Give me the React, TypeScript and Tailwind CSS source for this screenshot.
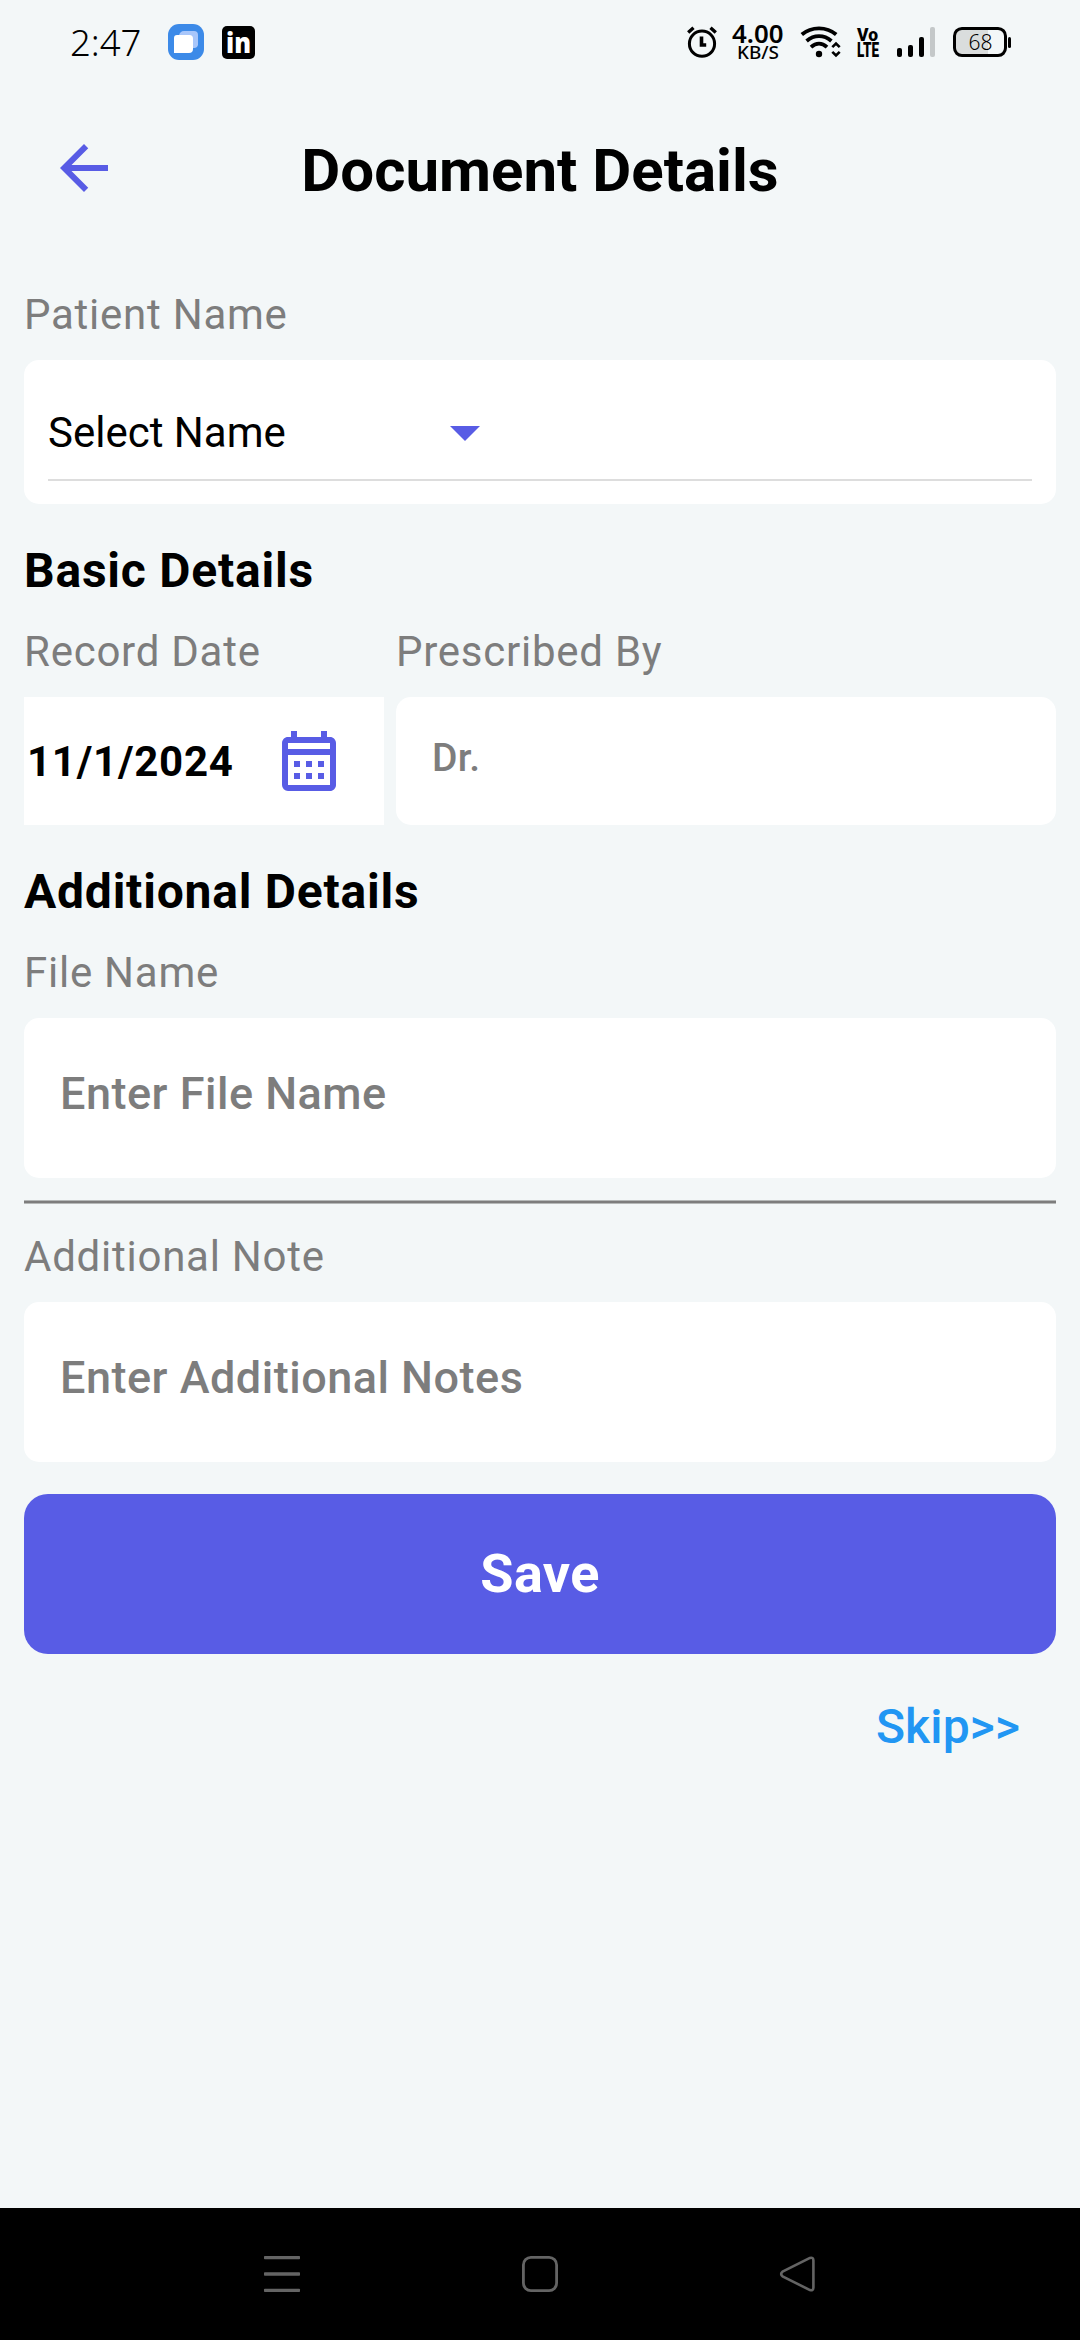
import type { ReactNode } from "react";

function StatusBar() {
  return (
    <div className="flex h-[84px] shrink-0 items-center justify-between pl-[70px] pr-[68px] text-black">
      <div className="flex items-center">
        <span className="w-[98px] font-['Noto_Sans',sans-serif] text-[36.500px] font-[350] leading-[84px]">2:47</span>
        <svg width="36" height="36" viewBox="0 0 36 36">
          <rect width="36" height="36" rx="11" fill="#3c8ae8" />
          <path d="M16 7h10a4 4 0 0 1 4 4v10a4 4 0 0 1-4 3H14a3 3 0 0 1-3-3v-9a5 5 0 0 1 5-5z" fill="#a8c6fa" />
          <path d="M9 11h12.500a3.500 3.500 0 0 1 3.500 3.500V25a4 4 0 0 1-4 4H6V14a3 3 0 0 1 3-3z" fill="#fff" />
        </svg>
        <svg className="ml-[18px] overflow-visible" width="33" height="33" viewBox="0 0 33 33">
          <rect width="33" height="33" rx="5" fill="#000" />
          <text x="4" y="27" textLength="25" lengthAdjust="spacingAndGlyphs" fill="#fff" className="font-['Open_Sans',sans-serif] text-[28px] font-extrabold">
            in
          </text>
        </svg>
      </div>
      <div className="flex items-center">
        <svg width="32" height="36" viewBox="0 0 32 36" fill="none" stroke="#000">
          <circle cx="16" cy="19.700" r="12.600" strokeWidth="3" />
          <path d="M15.500 12.500v8.500h4.700" strokeWidth="3.600" />
          <path d="M2.200 8.500L7.500 3.800M29.800 8.500L24.500 3.800" strokeWidth="3.400" />
        </svg>
        <svg className="ml-[14px] overflow-visible" width="52" height="44" viewBox="0 0 52 44">
          <text x="0" y="22.500" textLength="51.500" lengthAdjust="spacingAndGlyphs" className="font-['Noto_Sans',sans-serif] text-[24.500px] font-semibold">
            4.00
          </text>
          <text x="5" y="39.200" textLength="42" lengthAdjust="spacingAndGlyphs" className="font-['Noto_Sans',sans-serif] text-[18.500px] font-medium">
            KB/S
          </text>
        </svg>
        <svg className="ml-[16px]" width="42" height="36" viewBox="0 0 42 36" fill="none" stroke="#000" strokeWidth="3.800">
          <path d="M1.800 10.500C11.500 2.200 26.500 2.200 36.200 10.500" />
          <path d="M6.600 17C14 10.500 24 10.500 31.400 17" />
          <path d="M11 23.200C16 18.600 22 18.600 27 23.200" />
          <circle cx="19" cy="30" r="3.200" fill="#000" stroke="none" />
          <path d="M32.300 23.200L36 19.500l3.700 3.700M32.300 27.800L36 31.500l3.700-3.700" strokeWidth="2.600" />
        </svg>
        <svg className="ml-[15px] overflow-visible" width="23" height="36" viewBox="0 0 23 36">
          <text x="0" y="17" textLength="21" lengthAdjust="spacingAndGlyphs" className="font-['Roboto',sans-serif] text-[19px] font-black">
            Vo
          </text>
          <text x="0" y="33" textLength="22" lengthAdjust="spacingAndGlyphs" className="font-['Roboto',sans-serif] text-[19.500px] font-black">
            LTE
          </text>
        </svg>
        <svg className="ml-[16px]" width="40" height="36" viewBox="0 0 40 36">
          <rect x="1" y="24" width="5" height="9" rx="2" />
          <rect x="12" y="21" width="5" height="12" rx="2" />
          <rect x="23" y="13" width="5" height="20" rx="2" />
          <rect x="34" y="3" width="5" height="30" rx="2" fill="#c4c8c9" />
        </svg>
        <svg className="ml-[16px]" width="60" height="36" viewBox="0 0 60 36">
          <path d="M9 4h27v28H9a6 6 0 0 1-6-6V10a6 6 0 0 1 6-6z" fill="#dadddd" />
          <rect x="2.500" y="4.400" width="51" height="27.200" rx="7.500" fill="none" stroke="#000" strokeWidth="3" />
          <rect x="56" y="13" width="3" height="11" rx="1.500" />
          <text x="16.500" y="25.500" textLength="24" lengthAdjust="spacingAndGlyphs" className="font-['Noto_Sans',sans-serif] text-[21.500px] font-light">
            68
          </text>
        </svg>
      </div>
    </div>
  );
}

function Header() {
  return (
    <header className="flex h-[168px] shrink-0 items-center pl-12 pr-[120px]">
      <svg width="72" height="72" viewBox="0 0 24 24" fill="#585ce5">
        <path d="M20 11H7.830l5.590-5.590L12 4l-8 8 8 8 1.410-1.410L7.830 13H20v-2z" />
      </svg>
      <h1 className="flex-1 pt-[5px] text-center text-[60px] font-bold leading-[70px]">Document Details</h1>
    </header>
  );
}

function Label({ children }: { children: ReactNode }) {
  return <div className="h-[50px] text-[42px] leading-[50px] tracking-[0.75px] text-[#7d7d7d]">{children}</div>;
}

function Heading({ children }: { children: ReactNode }) {
  return <h2 className="mt-[39px] h-[56px] text-[48px] font-bold leading-[56px] tracking-[0.78px]">{children}</h2>;
}

function Field({ children }: { children: ReactNode }) {
  return (
    <div className="mt-5 flex h-[160px] items-center rounded-[15px] bg-white pb-[9px] pl-9 text-[45px] font-medium tracking-[0.5px] text-[#7d7d7d]">
      {children}
    </div>
  );
}

function NavBar() {
  return (
    <nav className="flex h-[132px] shrink-0 items-center justify-between bg-black px-[262px]">
      <svg width="40" height="40" viewBox="0 0 40 40" fill="#646464">
        <rect x="2" y="2" width="36" height="3.300" rx="0.800" />
        <rect x="2" y="18.300" width="36" height="3.400" rx="0.800" />
        <rect x="2" y="34.700" width="36" height="3.300" rx="0.800" />
      </svg>
      <svg width="40" height="40" viewBox="0 0 40 40" fill="none" stroke="#646464" strokeWidth="2.800">
        <rect x="3.400" y="3.400" width="33.200" height="33.200" rx="7.500" />
      </svg>
      <svg width="40" height="40" viewBox="0 0 40 40" fill="none" stroke="#646464" strokeWidth="2.600" strokeLinejoin="round">
        <path d="M4.500 17.700L32 3.900Q35.200 3 35.400 6.300V33.700Q35.200 37 32 36.100L4.500 22.300Q1.800 20 4.500 17.700z" />
      </svg>
    </nav>
  );
}

export default function App() {
  return (
    <div className="flex h-[2340px] w-[1080px] flex-col overflow-hidden bg-[#f3f7f8] font-['Roboto',sans-serif] text-black">
      <StatusBar />
      <Header />
      <main className="flex flex-1 flex-col px-6 pt-[38px]">
        <Label>Patient Name</Label>
        <div className="mt-5 h-[144px] rounded-[15px] bg-white px-6 pt-[24px]">
          <div className="flex h-[97px] w-full items-center justify-between border-b-2 border-[#dddddd]">
            <span className="pt-[2px] text-[42px] leading-[50px]">Select Name</span>
            <svg className="mr-[531px] mt-px" width="72" height="72" viewBox="0 0 24 24" fill="#585ce5">
              <path d="M7 10l5 5 5-5z" />
            </svg>
          </div>
        </div>

        <Heading>Basic Details</Heading>
        <div className="mt-[28px] grid grid-cols-[360px_1fr] gap-x-3 gap-y-[20px]">
          <Label>Record Date</Label>
          <Label>Prescribed By</Label>
          <div className="flex h-[128px] items-center justify-between bg-white pl-[3px] pr-[39px]">
            <span className="pt-[2px] text-[42px] font-bold leading-[50px] tracking-[0.75px]">11/1/2024</span>
            <svg width="72" height="72" viewBox="0 0 24 24" fill="#585ce5">
              <path d="M19 4h-1V2h-2v2H8V2H6v2H5c-1.110 0-1.990.9-1.990 2L3 20a2 2 0 0 0 2 2h14c1.100 0 2-.9 2-2V6c0-1.100-.9-2-2-2zm0 16H5V10h14v10zm0-12H5V6h14v2zM9 14H7v-2h2v2zm4 0h-2v-2h2v2zm4 0h-2v-2h2v2zm-8 4H7v-2h2v2zm4 0h-2v-2h2v2zm4 0h-2v-2h2v2z" />
            </svg>
          </div>
          <div className="flex h-[128px] items-center rounded-[15px] bg-white pb-[5px] pl-9 text-[39px] font-medium tracking-[0.3px] text-[#7d7d7d]">
            Dr.
          </div>
        </div>

        <Heading>Additional Details</Heading>
        <div className="mt-7">
          <Label>File Name</Label>
          <Field>Enter File Name</Field>
        </div>
        <div className="mt-[22px] h-1 border-y border-[#b5b8b8] bg-[#7d7d7d]" />
        <div className="mt-7">
          <Label>Additional Note</Label>
          <Field>Enter Additional Notes</Field>
        </div>
        <button className="mt-8 h-[160px] rounded-[24px] bg-[#585ce5] pb-[2px] text-[54px] font-bold tracking-[0.4px] text-white">Save</button>
        <div className="mt-[45px] pr-9 text-right text-[48px] font-medium leading-[56px] tracking-[0.15px] text-[#2196f3]">Skip&gt;&gt;</div>
      </main>
      <NavBar />
    </div>
  );
}
